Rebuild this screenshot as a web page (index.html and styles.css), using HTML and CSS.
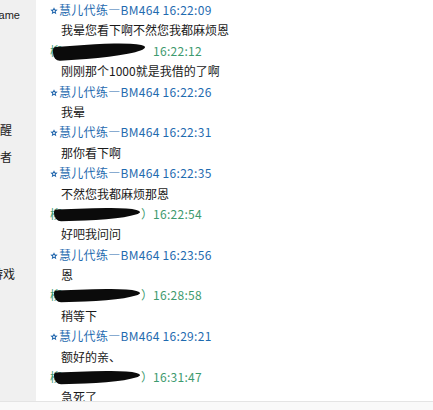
FILE: index.html
```html
<!DOCTYPE html>
<html lang="zh-CN">
<head>
  <meta charset="UTF-8" />
  <title>聊天记录</title>
  <link rel="stylesheet" href="styles.css">
</head>
<body>
  <div class="window">
    <!-- 左侧栏（被截断） -->
    <div class="side">
      <div class="side-item game">Game</div>
      <div class="side-item wake">提醒</div>
      <div class="side-item who">作者</div>
      <div class="side-item play">游戏</div>
    </div>

    <!-- 聊天记录 -->
    <div class="log">
      <div class="head me">
        <svg class="star" viewBox="0 0 10 10"><path d="M5 0.4 L6.3 3.2 L9.6 3.5 L7.1 5.6 L7.9 9.1 L5 7.3 L2.1 9.1 L2.9 5.6 L0.4 3.5 L3.7 3.2 Z" fill="#1e64ac"/><circle cx="5" cy="5" r="1.2" fill="#fff"/></svg>慧儿代练—BM464 16:22:09
      </div>
      <div class="msg">我晕您看下啊不然您我都麻烦恩</div>

      <div class="head you">
        <span class="nick">柳<span class="blob wide"></span></span><span class="paren"></span>16:22:12
      </div>
      <div class="msg">刚刚那个1000就是我借的了啊</div>

      <div class="head me">
        <svg class="star" viewBox="0 0 10 10"><path d="M5 0.4 L6.3 3.2 L9.6 3.5 L7.1 5.6 L7.9 9.1 L5 7.3 L2.1 9.1 L2.9 5.6 L0.4 3.5 L3.7 3.2 Z" fill="#1e64ac"/><circle cx="5" cy="5" r="1.2" fill="#fff"/></svg>慧儿代练—BM464 16:22:26
      </div>
      <div class="msg">我晕</div>

      <div class="head me">
        <svg class="star" viewBox="0 0 10 10"><path d="M5 0.4 L6.3 3.2 L9.6 3.5 L7.1 5.6 L7.9 9.1 L5 7.3 L2.1 9.1 L2.9 5.6 L0.4 3.5 L3.7 3.2 Z" fill="#1e64ac"/><circle cx="5" cy="5" r="1.2" fill="#fff"/></svg>慧儿代练—BM464 16:22:31
      </div>
      <div class="msg">那你看下啊</div>

      <div class="head me">
        <svg class="star" viewBox="0 0 10 10"><path d="M5 0.4 L6.3 3.2 L9.6 3.5 L7.1 5.6 L7.9 9.1 L5 7.3 L2.1 9.1 L2.9 5.6 L0.4 3.5 L3.7 3.2 Z" fill="#1e64ac"/><circle cx="5" cy="5" r="1.2" fill="#fff"/></svg>慧儿代练—BM464 16:22:35
      </div>
      <div class="msg">不然您我都麻烦那恩</div>

      <div class="head you">
        <span class="nick">柳<span class="blob"></span></span><span class="paren">）</span>16:22:54
      </div>
      <div class="msg">好吧我问问</div>

      <div class="head me">
        <svg class="star" viewBox="0 0 10 10"><path d="M5 0.4 L6.3 3.2 L9.6 3.5 L7.1 5.6 L7.9 9.1 L5 7.3 L2.1 9.1 L2.9 5.6 L0.4 3.5 L3.7 3.2 Z" fill="#1e64ac"/><circle cx="5" cy="5" r="1.2" fill="#fff"/></svg>慧儿代练—BM464 16:23:56
      </div>
      <div class="msg">恩</div>

      <div class="head you">
        <span class="nick">柳<span class="blob"></span></span><span class="paren">）</span>16:28:58
      </div>
      <div class="msg">稍等下</div>

      <div class="head me">
        <svg class="star" viewBox="0 0 10 10"><path d="M5 0.4 L6.3 3.2 L9.6 3.5 L7.1 5.6 L7.9 9.1 L5 7.3 L2.1 9.1 L2.9 5.6 L0.4 3.5 L3.7 3.2 Z" fill="#1e64ac"/><circle cx="5" cy="5" r="1.2" fill="#fff"/></svg>慧儿代练—BM464 16:29:21
      </div>
      <div class="msg">额好的亲、</div>

      <div class="head you">
        <span class="nick">柳<span class="blob"></span></span><span class="paren">）</span>16:31:47
      </div>
      <div class="msg">急死了</div>
    </div>
  </div>
  <div class="foot"></div>
</body>
</html>
```

FILE: styles.css
```css
body {
  margin: 0;
  background: #fafafa;
  font-family: "Microsoft YaHei", "Noto Sans CJK SC", sans-serif;
  font-size: 12px;
  overflow: hidden;
}

.window {
  display: flex;
  height: 401px;
  border-bottom: 1px solid #e4e4e4;
  background: #fff;
}

.side {
  width: 36px;
  flex: none;
  background: #f0f0f0;
  overflow: hidden;
  color: #222;
  display: flex;
  flex-direction: column;
}

.side-item {
  line-height: 16px;
  white-space: nowrap;
}

.side-item.game {
  margin-top: 7px;
  margin-left: -10px;
  font-family: "Liberation Sans", sans-serif;
  font-size: 11px;
}

.side-item.wake {
  margin-top: 99px;
  margin-left: -12px;
}

.side-item.who {
  margin-top: 11px;
  margin-left: -12px;
}

.side-item.play {
  margin-top: 101px;
  margin-left: -9px;
}

.log {
  flex: 1;
  padding-left: 14px;
  overflow: hidden;
}

.head, .msg {
  height: 20.4px;
  line-height: 20.4px;
  white-space: nowrap;
}

.head {
  letter-spacing: 0.3px;
}

.head.me {
  color: #1f6bb0;
}

.head.you {
  color: #3d9a6e;
}

.star {
  width: 8px;
  height: 8px;
  margin-right: 1px;
}

.msg {
  padding-left: 11px;
  color: #1a1a1a;
}

.nick {
  display: inline-block;
  position: relative;
  width: 91px;
  height: 20px;
  vertical-align: top;
}

/* 打码涂黑 */
.blob {
  position: absolute;
  left: 4px;
  top: 4px;
  width: 86px;
  height: 12px;
  background: #0b0b0b;
  border-radius: 3px 60% 70% 8px / 3px 50% 60% 9px;
  transform: skewY(-2deg);
}

.blob.wide {
  left: 3px;
  top: 3px;
  width: 92px;
  height: 14px;
  transform: skewY(-4deg);
}

.paren {
  display: inline-block;
  width: 12px;
  color: #3d9a6e;
}

.foot {
  height: 9px;
  background: #f9f9f9;
}
```
